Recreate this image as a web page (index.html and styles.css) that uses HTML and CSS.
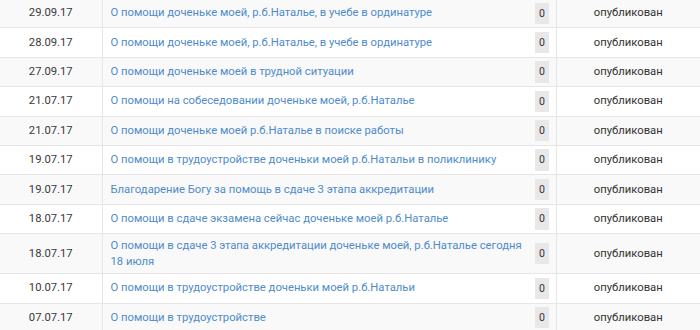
FILE: index.html
```html
<!DOCTYPE html>
<html lang="ru">
<head>
<meta charset="utf-8">
<link rel="stylesheet" href="styles.css">
</head>
<body>
<table class="posts">
  <colgroup>
    <col class="c-date"><col class="c-title"><col class="c-count"><col class="c-status">
  </colgroup>
  <tbody>
    <tr><td class="date">29.09.17</td><td class="title"><a href="#">О помощи доченьке моей, р.б.Наталье, в учебе в ординатуре</a></td><td class="count"><span class="badge">0</span></td><td class="status">опубликован</td></tr>
    <tr><td class="date">28.09.17</td><td class="title"><a href="#">О помощи доченьке моей, р.б.Наталье, в учебе в ординатуре</a></td><td class="count"><span class="badge">0</span></td><td class="status">опубликован</td></tr>
    <tr><td class="date">27.09.17</td><td class="title"><a href="#">О помощи доченьке моей в трудной ситуации</a></td><td class="count"><span class="badge">0</span></td><td class="status">опубликован</td></tr>
    <tr><td class="date">21.07.17</td><td class="title"><a href="#">О помощи на собеседовании доченьке моей, р.б.Наталье</a></td><td class="count"><span class="badge">0</span></td><td class="status">опубликован</td></tr>
    <tr><td class="date">21.07.17</td><td class="title"><a href="#">О помощи доченьке моей р.б.Наталье в поиске работы</a></td><td class="count"><span class="badge">0</span></td><td class="status">опубликован</td></tr>
    <tr><td class="date">19.07.17</td><td class="title"><a href="#">О помощи в трудоустройстве доченьки моей р.б.Натальи в поликлинику</a></td><td class="count"><span class="badge">0</span></td><td class="status">опубликован</td></tr>
    <tr><td class="date">19.07.17</td><td class="title"><a href="#">Благодарение Богу за помощь в сдаче 3 этапа аккредитации</a></td><td class="count"><span class="badge">0</span></td><td class="status">опубликован</td></tr>
    <tr><td class="date">18.07.17</td><td class="title"><a href="#">О помощи в сдаче экзамена сейчас доченьке моей р.б.Наталье</a></td><td class="count"><span class="badge">0</span></td><td class="status">опубликован</td></tr>
    <tr><td class="date">18.07.17</td><td class="title"><a href="#">О помощи в сдаче 3 этапа аккредитации доченьке моей, р.б.Наталье сегодня 18 июля</a></td><td class="count"><span class="badge">0</span></td><td class="status">опубликован</td></tr>
    <tr><td class="date">10.07.17</td><td class="title"><a href="#">О помощи в трудоустройстве доченьки моей р.б.Натальи</a></td><td class="count"><span class="badge">0</span></td><td class="status">опубликован</td></tr>
    <tr><td class="date">07.07.17</td><td class="title"><a href="#">О помощи в трудоустройстве</a></td><td class="count"><span class="badge">0</span></td><td class="status">опубликован</td></tr>
  </tbody>
</table>
</body>
</html>
```

FILE: styles.css
```css
html, body {
  margin: 0;
  padding: 0;
  background: #fff;
}
body {
  font-family: Roboto, "Liberation Sans", sans-serif;
  font-size: 11.25px;
  color: #333;
  overflow: hidden;
}
.posts {
  border-collapse: collapse;
  table-layout: fixed;
  width: 700px;
  margin-top: -1px;
}
.c-date { width: 102px; }
.c-title { width: 425px; }
.c-count { width: 29px; }
.c-status { width: 144px; }
.posts td {
  padding: 3.5px 8px;
  line-height: 16px;
  border-bottom: 1px solid #e6e6e6;
  vertical-align: middle;
}
.posts tr:nth-child(odd) td {
  background: #f9f9f9;
}
.date {
  text-align: center;
  border-right: 1px solid #e6e6e6;
  color: #3a3a3a;
}
.posts td.title {
  padding-right: 0;
}
.title a {
  color: #4f8bcb;
  text-decoration: none;
}
.posts td.count {
  padding: 3.5px 6px 3.5px 8px;
  text-align: left;
  border-right: 1px solid #e6e6e6;
}
.badge {
  display: inline-block;
  width: 14px;
  height: 21.4px;
  line-height: 21.4px;
  text-align: center;
  background: #e8e8e8;
  font-size: 10.5px;
  color: #333;
  vertical-align: middle;
}
.status {
  text-align: center;
  color: #333;
}
```
